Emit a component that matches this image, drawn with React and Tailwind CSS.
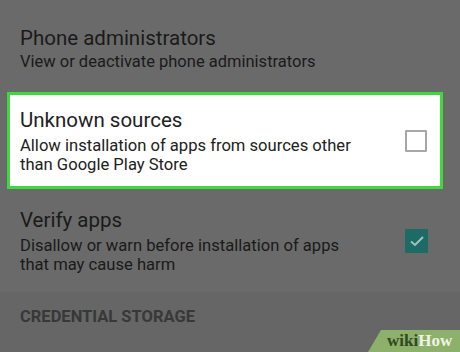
export default function App() {
  return (
    <div
      className="relative w-[460px] h-[352px] overflow-hidden bg-[#6a6a6a]"
      style={{ fontFamily: "Roboto, 'Noto Sans', sans-serif" }}
    >
      {/* Phone administrators */}
      <div className="px-5 pt-[26px] h-[92px]">
        <div className="text-[20.5px] leading-6 text-[#1a1a1a]">Phone administrators</div>
        <div className="text-[16.5px] leading-5 text-[#1a1a1a] mt-[2px]">View or deactivate phone administrators</div>
      </div>

      {/* Highlighted: Unknown sources */}
      <div className="ml-[7px] w-[436px] h-[97px] border-[3px] border-[#3fd83f] bg-white flex items-center pl-[10px] pr-[13px]">
        <div className="flex-1 self-start pt-[13px]">
          <div className="text-[20.5px] leading-6 text-[#212121]">Unknown sources</div>
          <div className="text-[16.6px] leading-[19px] text-[#212121] mt-[4px]">
            Allow installation of apps from sources other
            <br />
            than Google Play Store
          </div>
        </div>
        <div className="w-[22px] h-[22px] border-2 border-[#a8a8a8] rounded-[1px]" />
      </div>

      {/* Verify apps */}
      <div className="flex items-center pl-5 pr-[32px] h-[103px]">
        <div className="flex-1 self-start pt-[19px]">
          <div className="text-[20.5px] leading-6 text-[#1a1a1a]">Verify apps</div>
          <div className="text-[16.6px] leading-[18.5px] text-[#1a1a1a] mt-[5px]">
            Disallow or warn before installation of apps
            <br />
            that may cause harm
          </div>
        </div>
        <div className="w-[23px] h-[24px] bg-[#1d6b64] flex items-center justify-center">
          <svg width="16" height="14" viewBox="0 0 16 14">
            <path d="M2 7.5 L6 11 L14 3" fill="none" stroke="#9fc4be" strokeWidth="2" />
          </svg>
        </div>
      </div>

      {/* Section header */}
      <div className="h-[60px] bg-[#666666] px-5 pt-[15px]">
        <div className="text-[16.5px] leading-5 font-bold text-[#383838]">CREDENTIAL STORAGE</div>
      </div>

      {/* wikiHow badge */}
      <div className="absolute right-0 bottom-0 w-[92px] h-[22px]">
        <svg className="absolute inset-0" width="92" height="22" viewBox="0 0 92 22">
          <polygon points="13,0 92,0 92,22 0,22" fill="#8db06a" />
        </svg>
        <div
          className="absolute left-[19px] top-[1px] text-[17px] leading-5 font-bold whitespace-nowrap"
          style={{ fontFamily: "'Liberation Serif', serif" }}
        >
          <span className="text-[#2f4a23]">wiki</span>
          <span className="text-[#eef3e6]">How</span>
        </div>
      </div>
    </div>
  );
}
